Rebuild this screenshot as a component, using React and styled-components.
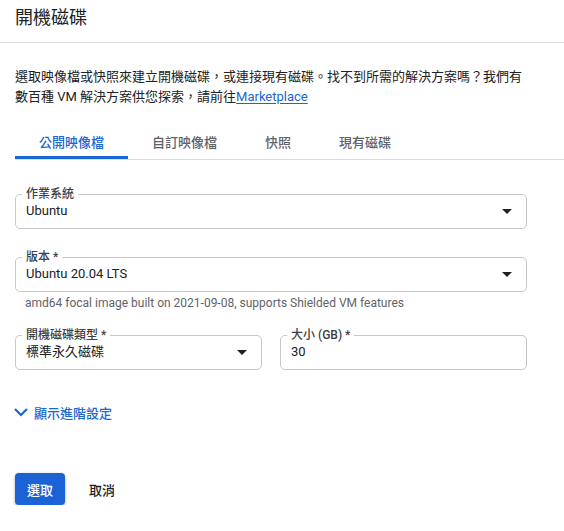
import React, { useState } from 'react'
import styled, { createGlobalStyle } from 'styled-components'

const GlobalStyle = createGlobalStyle`
  body {
    margin: 0;
    background: #fff;
    font-family: Roboto, "Noto Sans CJK TC", "Noto Sans", sans-serif;
    color: #202124;
  }
`

const Page = styled.div`
  display: flex;
  flex-direction: column;
`

const Header = styled.header`
  height: 43px;
  box-sizing: border-box;
  padding: 8px 15px 0;
  border-bottom: 1px solid #dadce0;
`

const Title = styled.h1`
  margin: 0;
  font-size: 18px;
  line-height: 20px;
  font-weight: 400;
  color: #202124;
`

const Body = styled.div`
  padding-left: 15px;
  display: flex;
  flex-direction: column;
`

const Description = styled.p`
  margin: 24px 0 0;
  max-width: 512px;
  font-size: 13px;
  line-height: 20px;
  color: #202124;
`

const Link = styled.a`
  color: #1967d2;
  text-decoration: underline;
  text-underline-offset: 2px;
  cursor: pointer;
`

const TabBar = styled.div`
  display: flex;
  margin-top: 16px;
  border-bottom: 1px solid #dadce0;
`

const Tab = styled.button`
  height: 36px;
  min-width: 72px;
  padding: 0 24px;
  border: none;
  background: none;
  font-family: inherit;
  font-size: 13px;
  font-weight: 500;
  color: ${p => (p.$active ? '#1967d2' : '#5f6368')};
  box-shadow: ${p => (p.$active ? 'inset 0 -3px 0 #1967d2' : 'none')};
  cursor: pointer;
`

const Form = styled.div`
  display: flex;
  flex-direction: column;
  max-width: 512px;
  margin-top: 27px;
`

const Row = styled.div`
  display: grid;
  grid-template-columns: 1fr 1fr;
  gap: 18px;
  margin-top: ${p => p.$top || 0}px;
`

const Field = styled.fieldset`
  margin: ${p => p.$top || 0}px 0 0;
  padding: 0 14px 7px 10px;
  min-width: 0;
  border: 1px solid #c7c7c7;
  border-radius: 5px;
  display: flex;
  align-items: center;
  cursor: pointer;
`

const Legend = styled.legend`
  padding: 0 4px;
  margin-left: -4px;
  font-size: 12px;
  line-height: 14px;
  font-weight: 500;
  color: #3c4043;
`

const Value = styled.span`
  flex: 1;
  font-size: 13px;
  line-height: 20px;
  color: #202124;
`

const Hint = styled.div`
  margin-top: 3px;
  padding-left: 10px;
  font-size: 12px;
  line-height: 16px;
  color: #5f6368;
`

const Expand = styled.button`
  display: flex;
  align-items: center;
  gap: 5px;
  align-self: flex-start;
  margin-top: 32px;
  margin-left: -2px;
  padding: 0;
  height: 20px;
  border: none;
  background: none;
  font-family: inherit;
  font-size: 13px;
  font-weight: 500;
  color: #1967d2;
  cursor: pointer;
`

const Actions = styled.div`
  display: flex;
  gap: 12px;
  margin-top: 51px;
`

const Button = styled.button`
  height: 32px;
  padding: 0 12px;
  border: none;
  border-radius: 4px;
  font-family: inherit;
  font-size: 13px;
  font-weight: 500;
  cursor: pointer;
  background: ${p => (p.$primary ? '#1a62d6' : 'transparent')};
  color: ${p => (p.$primary ? '#fff' : '#202124')};
  box-shadow: ${p =>
    p.$primary
      ? '0 1px 2px rgba(60,64,67,.3), 0 1px 3px 1px rgba(60,64,67,.15)'
      : 'none'};
`

const Caret = () => (
  <svg width="10" height="5" viewBox="0 0 10 5">
    <path d="M0 0h10L5 5z" fill="#202124" />
  </svg>
)

const Chevron = () => (
  <svg width="16" height="10" viewBox="0 0 16 10">
    <path d="M2 2l6 6 6-6" fill="none" stroke="#1967d2" strokeWidth="2.2" />
  </svg>
)

const tabs = ['公開映像檔', '自訂映像檔', '快照', '現有磁碟']

const Select = ({ label, value, top, caret = true }) => (
  <Field $top={top}>
    <Legend>{label}</Legend>
    <Value>{value}</Value>
    {caret && <Caret />}
  </Field>
)

export default function App() {
  const [active, setActive] = useState(0)

  return (
    <Page>
      <GlobalStyle />
      <Header>
        <Title>開機磁碟</Title>
      </Header>
      <Body>
        <Description>
          選取映像檔或快照來建立開機磁碟，或連接現有磁碟。找不到所需的解決方案嗎？我們有數百種 VM 解決方案供您探索，請前往<Link>Marketplace</Link>
        </Description>
        <TabBar>
          {tabs.map((t, i) => (
            <Tab key={t} $active={i === active} onClick={() => setActive(i)}>
              {t}
            </Tab>
          ))}
        </TabBar>
        <Form>
          <Select label="作業系統" value="Ubuntu" />
          <Select label="版本 *" value="Ubuntu 20.04 LTS" top={21} />
          <Hint>amd64 focal image built on 2021-09-08, supports Shielded VM features</Hint>
          <Row $top={17}>
            <Select label="開機磁碟類型 *" value="標準永久磁碟" />
            <Select label="大小 (GB) *" value="30" caret={false} />
          </Row>
          <Expand>
            <Chevron />
            顯示進階設定
          </Expand>
          <Actions>
            <Button $primary>選取</Button>
            <Button>取消</Button>
          </Actions>
        </Form>
      </Body>
    </Page>
  )
}
